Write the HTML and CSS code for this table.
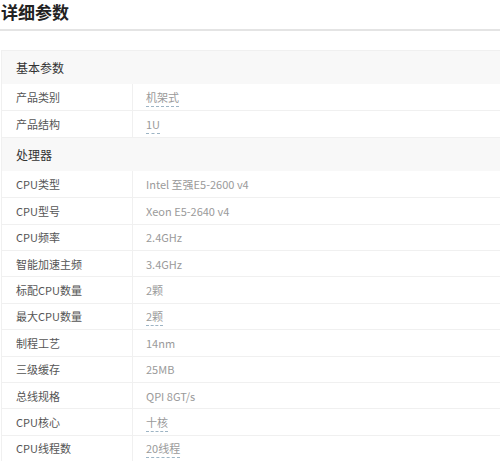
FILE: index.html
```html
<!DOCTYPE html>
<html lang="zh">
<head>
<meta charset="utf-8">
<link rel="stylesheet" href="styles.css">
</head>
<body>
<h2 class="title">详细参数</h2>
<div class="params">
  <div class="group">基本参数</div>
  <div class="row"><div class="label">产品类别</div><div class="value"><span class="link">机架式</span></div></div>
  <div class="row"><div class="label">产品结构</div><div class="value"><span class="link">1U</span></div></div>
  <div class="group">处理器</div>
  <div class="row"><div class="label">CPU类型</div><div class="value">Intel 至强E5-2600 v4</div></div>
  <div class="row"><div class="label">CPU型号</div><div class="value">Xeon E5-2640 v4</div></div>
  <div class="row"><div class="label">CPU频率</div><div class="value">2.4GHz</div></div>
  <div class="row"><div class="label">智能加速主频</div><div class="value">3.4GHz</div></div>
  <div class="row"><div class="label">标配CPU数量</div><div class="value">2颗</div></div>
  <div class="row"><div class="label">最大CPU数量</div><div class="value"><span class="link">2颗</span></div></div>
  <div class="row"><div class="label">制程工艺</div><div class="value">14nm</div></div>
  <div class="row"><div class="label">三级缓存</div><div class="value">25MB</div></div>
  <div class="row"><div class="label">总线规格</div><div class="value">QPI 8GT/s</div></div>
  <div class="row"><div class="label">CPU核心</div><div class="value"><span class="link">十核</span></div></div>
  <div class="row"><div class="label">CPU线程数</div><div class="value"><span class="link">20线程</span></div></div>
</div>
</body>
</html>
```
FILE: styles.css
```css
html, body {
  margin: 0;
  padding: 0;
  background: #fff;
}
body {
  font-family: "Noto Sans CJK SC", "Noto Sans", sans-serif;
  color: #333;
}
.title {
  margin: 0;
  height: 28px;
  padding-top: 1px;
  font-size: 17px;
  line-height: 21px;
  font-weight: bold;
  color: #222;
  padding-left: 1px;
  border-bottom: 2px solid #e4e4e4;
}
.params {
  margin-top: 19px;
  margin-left: 1px;
  border-top: 1px solid #f0f0f0;
  border-left: 1px solid #f0f0f0;
}
.group {
  height: 33px;
  display: flex;
  align-items: center;
  padding-left: 14px;
  background: #f8f8f8;
  font-size: 12px;
  color: #333;
}
.row {
  height: 26.4px;
  box-sizing: border-box;
  display: flex;
  align-items: center;
  border-top: 1px solid #f0f0f0;
  font-size: 11px;
}
.group + .row { border-top: none; }
.row + .group { border-top: 1px solid #f0f0f0; }
.label {
  width: 116px;
  padding-left: 14px;
  height: 100%;
  display: flex;
  align-items: center;
  border-right: 1px solid #f0f0f0;
  color: #555;
}
.value {
  padding-left: 13px;
  color: #9a9a9a;
}
.link {
  border-bottom: 1px dashed #9db4c4;
  padding-bottom: 1px;
}
```
